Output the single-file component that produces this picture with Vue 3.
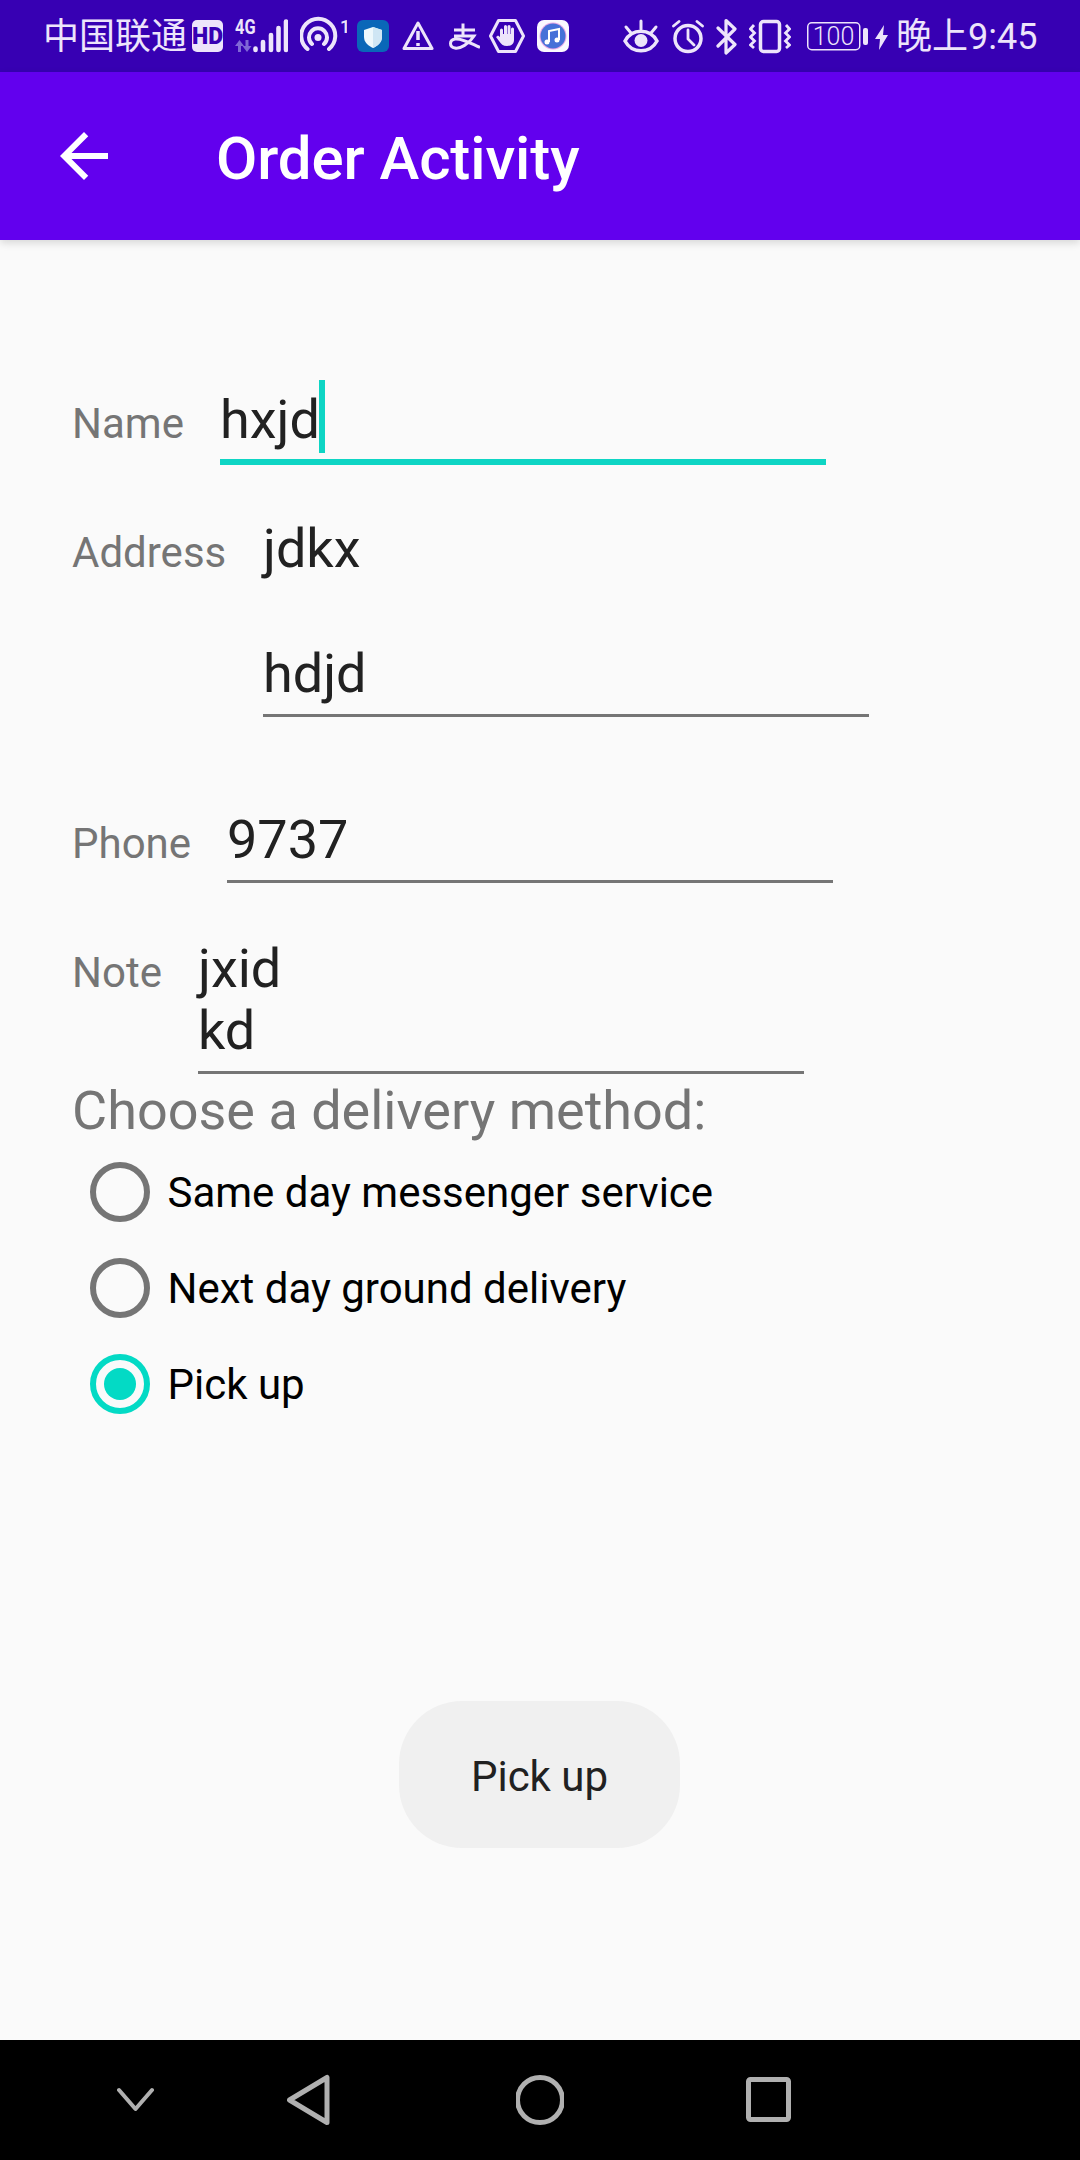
<script setup>
const radios = [
  { label: 'Same day messenger service', checked: false },
  { label: 'Next day ground delivery', checked: false },
  { label: 'Pick up', checked: true },
]
</script>

<template>
  <div class="page">
    <div class="status">
      <span class="carrier">中国联通</span>
      <svg class="i hd" width="31" height="72" viewBox="0 0 31 72">
        <rect x="0" y="20" width="31" height="32" rx="5" fill="#ede4fb" />
        <text x="15.5" y="44" text-anchor="middle" class="hd-text">HD</text>
      </svg>
      <svg class="i sig" width="53" height="72" viewBox="0 0 53 72">
        <text transform="translate(0 33.500) scale(0.82 1)" class="g4">4G</text>
        <path d="M4.500 40 L9 46 H6 V52 H3 V46 H0 Z M12 52 L16.500 46 H13.500 V40 H10.500 V46 H7.500 Z" fill="#8068d6" />
        <path d="M20.500 48.500 V50 M28 42 V50 M36 35 V50 M43.500 28 V50 M51 21.500 V50" stroke="#ede4fb" stroke-width="4.600" stroke-linecap="round" fill="none" />
      </svg>
      <svg class="i hot" width="47" height="72" viewBox="0 0 47 72">
        <path d="M7.500 49 A17 17 0 1 1 29 49 M12 44 A9 9 0 1 1 24 44" fill="none" stroke="#ede4fb" stroke-width="4" stroke-linecap="round" />
        <circle cx="18" cy="37.500" r="3.500" fill="#ede4fb" />
        <text x="40" y="33" class="one">1</text>
      </svg>
      <svg class="i shield" width="32" height="72" viewBox="0 0 32 72">
        <rect x="0" y="20" width="32" height="32" rx="6" fill="#0a67b8" />
        <path d="M16 27 L25 30 V37 C25 43 20 46 16 48 C12 46 7 43 7 37 V30 Z" fill="#eef8fc" />
        <path d="M16 27 L25 30 V37 C25 43 20 46 16 48 Z" fill="#cfe6f4" />
      </svg>
      <svg class="i warn" width="32" height="72" viewBox="0 0 32 72">
        <path d="M16 23 L30 48.500 H2 Z" fill="none" stroke="#ede4fb" stroke-width="3" stroke-linejoin="round" />
        <path d="M16 31 V40 M16 43 V46" stroke="#ede4fb" stroke-width="3.500" fill="none" />
      </svg>
      <svg class="i ali" width="32" height="72" viewBox="0 0 32 72">
        <path d="M6 30 H27 M15 23.500 V36 M6 36 H26 C21 44 12 49 7 48 C1 47 1 40 7 39 C14 38 22 43 32 47.500" fill="none" stroke="#ede4fb" stroke-width="3" />
      </svg>
      <svg class="i hand" width="36" height="72" viewBox="0 0 36 72">
        <path d="M9.500 20.500 H26.500 L34.500 36 L26.500 51.500 H9.500 L1.500 36 Z" fill="none" stroke="#ede4fb" stroke-width="3" stroke-linejoin="round" />
        <path d="M12.500 30 V38 M16.500 26.500 V36 M20 26.500 V36 M23.500 29 V38" stroke="#ede4fb" stroke-width="3" stroke-linecap="round" fill="none" />
        <path d="M11 34 H25 V40 C25 44 22 46 18 46 C14 46 12 44 10 41 L7 37 L9 35.500 L11 37 Z" fill="#ede4fb" />
      </svg>
      <svg class="i music" width="32" height="72" viewBox="0 0 32 72">
        <rect x="0" y="20" width="32" height="32" rx="7" fill="#fbf8ff" />
        <circle cx="16" cy="36" r="13.500" fill="#e9a8e6" />
        <circle cx="16" cy="36" r="12.500" fill="#4670d8" />
        <path d="M12 42 V31 L22 29 V40" fill="none" stroke="#fff" stroke-width="2" />
        <circle cx="10" cy="42" r="2.500" fill="#fff" />
        <circle cx="20" cy="40" r="2.500" fill="#fff" />
      </svg>

      <svg class="i eye" width="36" height="72" viewBox="0 0 36 72">
        <path d="M2 41 C9 28 27 28 34 41 C27 54 9 54 2 41 Z" fill="none" stroke="#ede4fb" stroke-width="3.500" />
        <circle cx="18" cy="40.500" r="6.500" fill="#ede4fb" />
        <path d="M18 21 V29 M3 27 L8 33 M33 27 L28 33" stroke="#ede4fb" stroke-width="3" stroke-linecap="round" fill="none" />
      </svg>
      <svg class="i alarm" width="32" height="72" viewBox="0 0 32 72">
        <circle cx="16" cy="38.500" r="13" fill="none" stroke="#ede4fb" stroke-width="3.500" />
        <path d="M16 30 V39 L22 45 M1.500 26 L7 21.500 M30.500 26 L25 21.500" fill="none" stroke="#ede4fb" stroke-width="2.800" stroke-linecap="round" />
      </svg>
      <svg class="i bt" width="21" height="72" viewBox="0 0 21 72">
        <path d="M2 28 L19 44.500 L10 53 V20.500 L19 29 L2 46" fill="none" stroke="#ede4fb" stroke-width="3.200" stroke-linecap="round" stroke-linejoin="round" />
      </svg>
      <svg class="i vib" width="42" height="72" viewBox="0 0 42 72">
        <rect x="11.500" y="21.500" width="19" height="30" rx="3" fill="none" stroke="#ede4fb" stroke-width="3.500" />
        <path d="M5 25 L1.500 29 L5.500 33 L1.500 37 L5.500 41 L1.500 45 L5 48 M37 25 L40.500 29 L36.500 33 L40.500 37 L36.500 41 L40.500 45 L37 48" fill="none" stroke="#ede4fb" stroke-width="2.800" />
      </svg>
      <svg class="i bat" width="61" height="72" viewBox="0 0 61 72">
        <rect x="0.750" y="22.750" width="52" height="27" rx="4" fill="none" stroke="#ede4fb" stroke-width="1.500" />
        <text x="26.500" y="45" text-anchor="middle" class="bat-text">100</text>
        <rect x="56" y="28" width="5" height="17" rx="2" fill="#ede4fb" />
      </svg>
      <svg class="i bolt" width="13" height="72" viewBox="0 0 13 72">
        <path d="M9 25 L0 39 H5 L4 50 L13 35 H8 Z" fill="#ede4fb" />
      </svg>
      <span class="time">晚上9:45</span>
    </div>

    <header class="appbar">
      <svg class="back" width="72" height="72" viewBox="0 0 24 24">
        <path d="M20 11H7.830l5.590-5.590L12 4l-8 8 8 8 1.410-1.410L7.830 13H20v-2z" fill="#fff" />
      </svg>
      <h1 class="title">Order Activity</h1>
    </header>

    <main class="main">
      <div class="row row-name">
        <span class="label">Name</span>
        <div class="field focused">hxjd<span class="caret"></span></div>
      </div>
      <div class="row row-address">
        <span class="label">Address</span>
        <div class="field">jdkx<br /><br />hdjd</div>
      </div>
      <div class="row row-phone">
        <span class="label">Phone</span>
        <div class="field">9737</div>
      </div>
      <div class="row row-note">
        <span class="label">Note</span>
        <div class="field">jxid<br />kd</div>
      </div>

      <div class="heading">Choose a delivery method:</div>

      <div class="radios">
        <div v-for="r in radios" :key="r.label" class="radio" :class="{ on: r.checked }">
          <span class="ring"><span v-if="r.checked" class="dot"></span></span>
          <span class="radio-label">{{ r.label }}</span>
        </div>
      </div>

      <button class="btn" type="button">Pick up</button>
    </main>

    <nav class="nav">
      <svg class="nav-chev" width="37" height="120" viewBox="0 0 37 120">
        <path d="M2 50 L18.500 69 L35 50" fill="none" stroke="#b0b0b0" stroke-width="4" stroke-linecap="round" stroke-linejoin="round" />
      </svg>
      <svg class="nav-back" width="43" height="120" viewBox="0 0 43 120">
        <path d="M40 37.500 V82.500 L2.500 60 Z" fill="none" stroke="#b0b0b0" stroke-width="5" stroke-linejoin="round" />
      </svg>
      <svg class="nav-home" width="48" height="120" viewBox="0 0 48 120">
        <circle cx="24" cy="60" r="22.500" fill="none" stroke="#b0b0b0" stroke-width="5" />
      </svg>
      <svg class="nav-recent" width="45" height="120" viewBox="0 0 45 120">
        <rect x="2.500" y="39.500" width="40" height="40" rx="2" fill="none" stroke="#b0b0b0" stroke-width="5" />
      </svg>
    </nav>
  </div>
</template>

<style scoped>
.page {
  width: 1080px;
  height: 2160px;
  display: flex;
  flex-direction: column;
  background: #fafafa;
  font-family: Roboto, "Noto Sans CJK SC", sans-serif;
  overflow: hidden;
}
.status {
  height: 72px;
  flex: none;
  display: flex;
  align-items: flex-start;
  background: #3700b3;
  color: #ede4fb;
  padding-left: 43px;
  font-size: 36px;
  line-height: 74px;
}
.status svg { flex: none; display: block; }
.carrier, .time { font-family: Roboto, "Noto Sans CJK SC", sans-serif; white-space: nowrap; }
.hd { margin-left: 5px; }
.sig { margin-left: 12px; }
.hot { margin-left: 12px; }
.shield { margin-left: 10px; }
.warn { margin-left: 13px; }
.ali { margin-left: 14px; }
.hand { margin-left: 9px; }
.music { margin-left: 12px; }
.eye { margin-left: 54px; }
.alarm { margin-left: 13px; }
.bt { margin-left: 12px; }
.vib { margin-left: 12px; }
.bat { margin-left: 16px; }
.bolt { margin-left: 7px; }
.time { margin-left: 8px; }
.hd-text { font: 900 23px Roboto, sans-serif; fill: #3700b3; }
.g4 { font: 700 20px Roboto, sans-serif; fill: #ede4fb; }
.one { font: 500 18px Roboto, sans-serif; fill: #ede4fb; }
.bat-text { font: 300 25px Roboto, sans-serif; fill: #ede4fb; }

.appbar {
  height: 168px;
  flex: none;
  display: flex;
  align-items: center;
  background: #6200ee;
  box-shadow: 0 3px 8px rgba(0, 0, 0, 0.14);
  padding-left: 48px;
  position: relative;
  z-index: 1;
}
.back { flex: none; }
.title {
  margin: 5px 0 0 96px;
  font-size: 60px;
  font-weight: 500;
  line-height: 70px;
  letter-spacing: -0.1px;
  color: #fff;
}

.main {
  flex: 1;
  display: flex;
  flex-direction: column;
  padding: 149px 0 0 72px;
}
.row {
  display: flex;
  align-items: baseline;
}
.label {
  flex: none;
  font-size: 42px;
  color: #757575;
}
.field {
  position: relative;
  width: 606px;
  font-size: 54px;
  line-height: 62.5px;
  color: #212121;
  padding-bottom: 9px;
  border-bottom: 3px solid #757575;
}
.field.focused {
  padding-bottom: 7px;
  border-bottom: 6px solid #0ed5c4;
}
.caret {
  position: absolute;
  left: 99px;
  top: -9px;
  width: 6px;
  height: 73px;
  background: #0ed5c4;
}
.row-name .label { width: 148px; }
.row-address { margin-top: 53px; }
.row-address .label { width: 191px; }
.row-phone { margin-top: 92px; }
.row-phone .label { width: 155px; }
.row-phone .field { padding-bottom: 8px; }
.row-note { margin-top: 55px; }
.row-note .label { width: 126px; }
.row-note .field { padding-bottom: 8px; }

.heading {
  margin-top: 5px;
  font-size: 54px;
  line-height: 63px;
  color: #757575;
}
.radios {
  margin-top: 2px;
  display: flex;
  flex-direction: column;
}
.radio {
  height: 96px;
  display: flex;
  align-items: center;
  padding-left: 18px;
}
.ring {
  flex: none;
  box-sizing: border-box;
  width: 60px;
  height: 60px;
  border: 6px solid #757575;
  border-radius: 50%;
  display: flex;
  align-items: center;
  justify-content: center;
}
.radio.on .ring { border-color: #03dac5; }
.dot {
  width: 32px;
  height: 32px;
  border-radius: 50%;
  background: #03dac5;
}
.radio-label {
  margin: 2px 0 0 17.500px;
  font-size: 42px;
  line-height: 49px;
  color: #000;
}
.btn {
  align-self: flex-start;
  margin: 269px 0 0 327px;
  width: 281px;
  height: 147px;
  border: 0;
  border-radius: 63px;
  background: #f0f0f0;
  color: #212121;
  font-family: Roboto, sans-serif;
  font-size: 42px;
  padding: 4px 0 0;
}

.nav {
  height: 120px;
  flex: none;
  display: flex;
  align-items: flex-start;
  background: #000;
}
.nav svg { flex: none; display: block; }
.nav-chev { margin-left: 117px; }
.nav-back { margin-left: 133px; }
.nav-home { margin-left: 186px; }
.nav-recent { margin-left: 182px; }
</style>
